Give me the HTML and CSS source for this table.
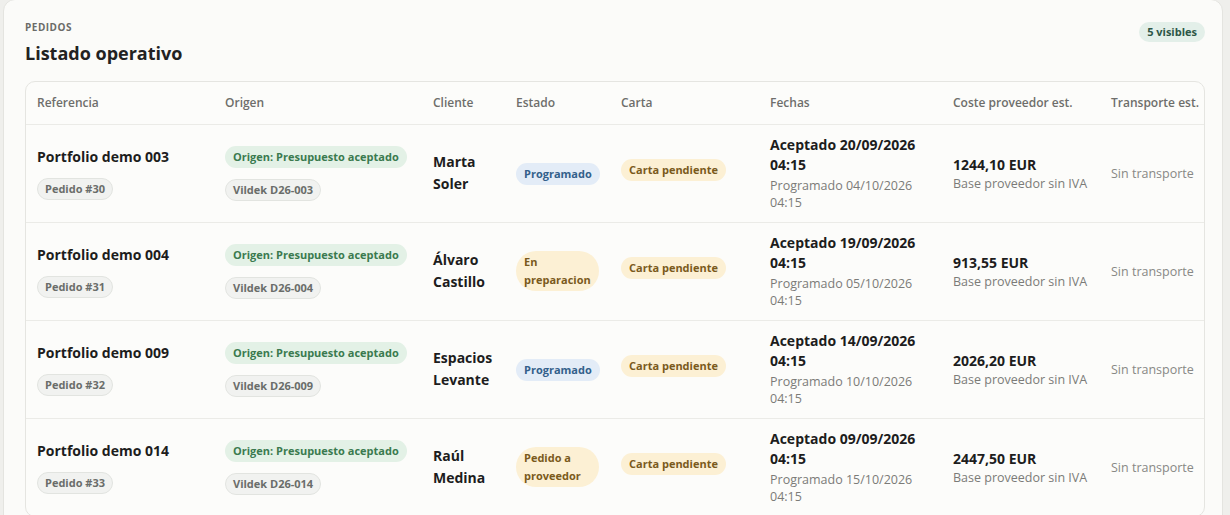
FILE: index.html
```html
<!DOCTYPE html>
<html lang="es">
<head>
<meta charset="utf-8">
<title>Pedidos - Listado operativo</title>
<link rel="stylesheet" href="styles.css">
</head>
<body>
<section class="card">
  <header class="card-head">
    <div>
      <div class="eyebrow">PEDIDOS</div>
      <h1 class="title">Listado operativo</h1>
    </div>
    <span class="count">5 visibles</span>
  </header>
  <div class="table-wrap">
    <table class="orders">
      <colgroup>
        <col class="c-ref"><col class="c-orig"><col class="c-cli"><col class="c-est"><col class="c-carta"><col class="c-fech"><col class="c-coste"><col class="c-trans">
      </colgroup>
      <thead>
        <tr>
          <th>Referencia</th><th>Origen</th><th>Cliente</th><th>Estado</th><th>Carta</th><th>Fechas</th><th>Coste proveedor est.</th><th>Transporte est.</th>
        </tr>
      </thead>
      <tbody>
        <tr>
          <td><div class="stack"><span class="ref">Portfolio demo 003</span><span class="pill gray">Pedido #30</span></div></td>
          <td><div class="stack"><span class="pill green">Origen: Presupuesto aceptado</span><span class="pill gray">Vildek D26-003</span></div></td>
          <td class="client">Marta Soler</td>
          <td><span class="pill blue">Programado</span></td>
          <td><div class="carta"><span class="pill yellow">Carta pendiente</span></div></td>
          <td><div class="date-main">Aceptado 20/09/2026 04:15</div><div class="date-sub">Programado 04/10/2026 04:15</div></td>
          <td><div class="amount">1244,10 EUR</div><div class="muted">Base proveedor sin IVA</div></td>
          <td class="muted">Sin transporte</td>
        </tr>
        <tr>
          <td><div class="stack"><span class="ref">Portfolio demo 004</span><span class="pill gray">Pedido #31</span></div></td>
          <td><div class="stack"><span class="pill green">Origen: Presupuesto aceptado</span><span class="pill gray">Vildek D26-004</span></div></td>
          <td class="client">Álvaro Castillo</td>
          <td><span class="pill yellow">En preparacion</span></td>
          <td><div class="carta"><span class="pill yellow">Carta pendiente</span></div></td>
          <td><div class="date-main">Aceptado 19/09/2026 04:15</div><div class="date-sub">Programado 05/10/2026 04:15</div></td>
          <td><div class="amount">913,55 EUR</div><div class="muted">Base proveedor sin IVA</div></td>
          <td class="muted">Sin transporte</td>
        </tr>
        <tr>
          <td><div class="stack"><span class="ref">Portfolio demo 009</span><span class="pill gray">Pedido #32</span></div></td>
          <td><div class="stack"><span class="pill green">Origen: Presupuesto aceptado</span><span class="pill gray">Vildek D26-009</span></div></td>
          <td class="client">Espacios Levante</td>
          <td><span class="pill blue">Programado</span></td>
          <td><div class="carta"><span class="pill yellow">Carta pendiente</span></div></td>
          <td><div class="date-main">Aceptado 14/09/2026 04:15</div><div class="date-sub">Programado 10/10/2026 04:15</div></td>
          <td><div class="amount">2026,20 EUR</div><div class="muted">Base proveedor sin IVA</div></td>
          <td class="muted">Sin transporte</td>
        </tr>
        <tr>
          <td><div class="stack"><span class="ref">Portfolio demo 014</span><span class="pill gray">Pedido #33</span></div></td>
          <td><div class="stack"><span class="pill green">Origen: Presupuesto aceptado</span><span class="pill gray">Vildek D26-014</span></div></td>
          <td class="client">Raúl Medina</td>
          <td><span class="pill yellow">Pedido a proveedor</span></td>
          <td><div class="carta"><span class="pill yellow">Carta pendiente</span></div></td>
          <td><div class="date-main">Aceptado 09/09/2026 04:15</div><div class="date-sub">Programado 15/10/2026 04:15</div></td>
          <td><div class="amount">2447,50 EUR</div><div class="muted">Base proveedor sin IVA</div></td>
          <td class="muted">Sin transporte</td>
        </tr>
      </tbody>
    </table>
  </div>
</section>
</body>
</html>
```

FILE: styles.css
```css
* { box-sizing: border-box; }
html, body { margin: 0; padding: 0; }
body {
  background: #efefec;
  font-family: "Open Sans", "Noto Sans", sans-serif;
  color: #1f1f1f;
  width: 1230px;
  height: 515px;
  overflow: hidden;
}
.card {
  margin: -1px 0 0 3px;
  width: 1220px;
  height: 530px;
  background: #fbfbf9;
  border: 1px solid #e4e4e0;
  border-radius: 12px;
  padding: 20px 17px 0 21px;
}
.card-head {
  display: flex;
  justify-content: space-between;
  align-items: flex-start;
}
.eyebrow {
  font-size: 10px;
  font-weight: 700;
  letter-spacing: 0.05em;
  color: #6b6b68;
  line-height: 14px;
}
.title {
  margin: 7px 0 0;
  font-size: 18px;
  font-weight: 700;
  line-height: 24px;
  color: #222;
}
.count {
  margin-top: 2px;
  background: #e3efe9;
  color: #2d5647;
  font-size: 11px;
  font-weight: 700;
  line-height: 20px;
  padding: 0 8px;
  border-radius: 999px;
}
.table-wrap {
  margin-top: 16px;
  border: 1px solid #e5e5e1;
  border-radius: 10px;
  background: #fcfcfa;
  overflow: hidden;
}
.orders {
  width: 1180px;
  border-collapse: collapse;
  table-layout: fixed;
}
.c-ref { width: 188px; }
.c-orig { width: 208px; }
.c-cli { width: 83px; }
.c-est { width: 105px; }
.c-carta { width: 149px; }
.c-fech { width: 183px; }
.c-coste { width: 158px; }
.c-trans { width: 106px; }
.orders th {
  text-align: left;
  font-size: 12px;
  font-weight: 600;
  color: #6e6e6b;
  height: 42px;
  padding: 0 11px;
  white-space: nowrap;
  border-bottom: 1px solid #ebebe7;
}
.orders td {
  padding: 10px 11px;
  vertical-align: middle;
  border-top: 1px solid #ebebe7;
  height: 98px;
}
.orders tbody tr:first-child td { border-top: none; }
.stack {
  display: flex;
  flex-direction: column;
  align-items: flex-start;
  gap: 11px;
}
.ref {
  font-size: 14px;
  font-weight: 700;
  line-height: 20px;
  color: #1d1d1d;
}
.pill {
  display: inline-block;
  font-size: 11px;
  font-weight: 700;
  line-height: 18px;
  padding: 2px 8px;
  border-radius: 999px;
}
.pill.gray {
  background: #f1f2f0;
  border: 1px solid #e2e4e0;
  color: #6a6d6a;
  padding: 1px 7px;
}
.pill.green { background: #e3f1e6; color: #3a7a4f; }
.pill.blue { background: #e3ecf7; color: #33608b; }
.pill.yellow { background: #fcf0d4; color: #7a5a1c; }
.carta { padding-bottom: 9px; }
.client {
  font-size: 14px;
  font-weight: 700;
  line-height: 22px;
  color: #1d1d1d;
}
.date-main {
  font-size: 14px;
  font-weight: 700;
  line-height: 20px;
  color: #1d1d1d;
}
.date-sub {
  margin-top: 2px;
  font-size: 12.5px;
  line-height: 17px;
  color: #7b7b78;
}
.amount {
  font-size: 14px;
  font-weight: 700;
  line-height: 20px;
  color: #1d1d1d;
}
.muted {
  font-size: 12.5px;
  line-height: 17px;
  color: #7b7b78;
}
td.muted { color: #888885; }
```
